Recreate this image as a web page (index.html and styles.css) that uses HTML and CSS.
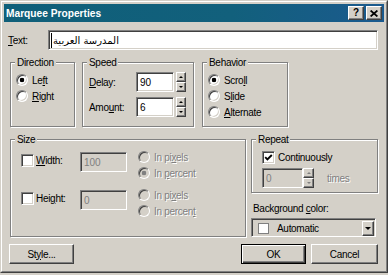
FILE: index.html
```html
<!DOCTYPE html>
<html>
<head>
<meta charset="utf-8">
<link rel="stylesheet" href="styles.css">
</head>
<body>
<div class="window">
 <div class="frame">
  <div class="titlebar">
   <span class="title">Marquee Properties</span>
   <span class="tb-btn help">?</span>
   <span class="tb-btn close"><svg width="8" height="7" viewBox="0 0 8 7"><path d="M0.6 0.5L7.4 6.5M7.4 0.5L0.6 6.5" stroke="#000" stroke-width="1.7" fill="none"/></svg></span>
  </div>
  <div class="client">
   <div class="text-row">
    <span class="text-lbl"><u>T</u>ext:</span>
    <div class="field text-field"><span class="caret"></span><span class="arabic">المدرسة العربية</span></div>
   </div>

   <div class="groups-row">
    <div class="group g-direction">
     <div class="group-title">Direction</div>
     <div class="group-body opts">
      <div class="opt"><span class="radio on"></span><span>Le<u>f</u>t</span></div>
      <div class="opt"><span class="radio"></span><span><u>R</u>ight</span></div>
     </div>
    </div>
    <div class="group g-speed">
     <div class="group-title">Speed</div>
     <div class="group-body spins">
      <div class="spin-row">
       <span class="spin-lbl"><u>D</u>elay:</span>
       <div class="field num">90</div>
       <div class="spinner"><span class="sbtn"><i class="arr up"></i></span><span class="sbtn"><i class="arr down"></i></span></div>
      </div>
      <div class="spin-row">
       <span class="spin-lbl">Amo<u>u</u>nt:</span>
       <div class="field num">6</div>
       <div class="spinner"><span class="sbtn"><i class="arr up"></i></span><span class="sbtn"><i class="arr down"></i></span></div>
      </div>
     </div>
    </div>
    <div class="group g-behavior">
     <div class="group-title">Behavior</div>
     <div class="group-body opts">
      <div class="opt"><span class="radio on"></span><span>Scro<u>l</u>l</span></div>
      <div class="opt"><span class="radio"></span><span>S<u>l</u>ide</span></div>
      <div class="opt"><span class="radio"></span><span><u>A</u>lternate</span></div>
     </div>
    </div>
   </div>

   <div class="bottom-row">
    <div class="group g-size">
     <div class="group-title">Size</div>
     <div class="group-body size-rows">
      <div class="size-row">
       <span class="check"></span>
       <span class="size-lbl"><u>W</u>idth:</span>
       <div class="field num dis">100</div>
       <div class="size-opts">
        <div class="opt dis-txt"><span class="radio dis"></span><span>In pi<u>x</u>els</span></div>
        <div class="opt dis-txt"><span class="radio dis on"></span><span>In <u>p</u>ercent</span></div>
       </div>
      </div>
      <div class="size-row">
       <span class="check"></span>
       <span class="size-lbl">Hei<u>g</u>ht:</span>
       <div class="field num dis">0</div>
       <div class="size-opts">
        <div class="opt dis-txt"><span class="radio dis"></span><span>In pi<u>x</u>els</span></div>
        <div class="opt dis-txt"><span class="radio dis"></span><span>In percen<u>t</u></span></div>
       </div>
      </div>
     </div>
    </div>

    <div class="right-col">
     <div class="group g-repeat">
      <div class="group-title">Repeat</div>
      <div class="group-body">
       <div class="opt"><span class="check"><svg width="9" height="9" viewBox="0 0 9 9"><path d="M1.2 4.2L3.4 6.4L7.8 2" stroke="#000" stroke-width="1.9" fill="none"/></svg></span><span class="cont-lbl">Continuously</span></div>
       <div class="repeat-spin">
        <div class="field num dis rep">0</div>
        <div class="spinner rep-sp"><span class="sbtn"><i class="arr up dis-arr"></i></span><span class="sbtn"><i class="arr down dis-arr"></i></span></div>
        <span class="times dis-txt">times</span>
       </div>
      </div>
     </div>
     <div class="bg-lbl">Background <u>c</u>olor:</div>
     <div class="dropdown">
      <span class="swatch"></span>
      <span class="dd-text">Automatic</span>
      <span class="dd-btn"><i class="arr down"></i></span>
     </div>
    </div>
   </div>

   <div class="buttons-row">
    <span class="btn style-btn">St<u>y</u>le...</span>
    <span class="btn default ok-btn">OK</span>
    <span class="btn cancel-btn">Cancel</span>
   </div>
  </div>
 </div>
</div>
</body>
</html>
```
FILE: styles.css
```css
* { box-sizing: border-box; }
html, body { margin: 0; padding: 0; }
body {
  width: 388px;
  height: 275px;
  overflow: hidden;
  background: #d4d0c8;
  font-family: "Liberation Sans", Arial, sans-serif;
  font-size: 10px;
  letter-spacing: -0.3px;
  color: #000;
}
u { text-decoration: underline; text-underline-offset: 1px; }

.window {
  width: 388px;
  height: 273px;
  border: 1px solid;
  border-color: #d4d0c8 #404040 #404040 #d4d0c8;
}
.frame {
  height: 100%;
  border: 1px solid;
  border-color: #fff #808080 #808080 #fff;
  padding: 2px;
  display: flex;
  flex-direction: column;
}

/* title bar */
.titlebar {
  height: 18px;
  flex: none;
  display: flex;
  align-items: center;
  padding: 0 2px 0 2px;
  background: linear-gradient(to right, #0f5f79 0%, #12607c 60%, #1b5a8e 100%);
}
.title {
  flex: 1;
  color: #fff;
  font-weight: bold;
  font-size: 10.2px;
  letter-spacing: 0;
}
.tb-btn {
  width: 16px;
  height: 14px;
  display: flex;
  align-items: center;
  justify-content: center;
  background: #d4d0c8;
  border: 1px solid;
  border-color: #fff #404040 #404040 #fff;
  box-shadow: inset -1px -1px 0 #808080;
  font-weight: bold;
  font-size: 10px;
  letter-spacing: 0;
  line-height: 1;
}
.tb-btn.close { margin-left: 2px; }

/* client */
.client {
  flex: 1;
  display: flex;
  flex-direction: column;
  padding: 8px 6px 0 6px;
}

/* sunken field */
.field {
  border: 1px solid;
  border-color: #808080 #fff #fff #808080;
  box-shadow: inset 1px 1px 0 #404040, inset -1px -1px 0 #d4d0c8;
  background: #fff;
}

.text-row {
  display: flex;
  align-items: center;
  height: 20px;
}
.text-lbl {
  width: 40px;
  margin-left: -2px;
}
.text-field {
  flex: 1;
  height: 20px;
  display: flex;
  align-items: center;
  padding-left: 2px;
}
.caret {
  width: 1px;
  height: 15px;
  background: #000;
  margin-right: 1px;
}
.arabic {
  font-family: "DejaVu Sans", sans-serif;
  font-size: 10px;
  letter-spacing: 0;
}

/* group boxes */
.group {
  display: flex;
  flex-direction: column;
  border: 1px solid #808080;
  box-shadow: inset 1px 1px 0 #fff, 1px 1px 0 #fff;
}
.group-title {
  align-self: flex-start;
  height: 13px;
  line-height: 13px;
  margin: -7px 0 0 4px;
  padding: 0 2px;
  background: #d4d0c8;
}
.group-body {
  padding-top: 3px;
}

.groups-row {
  display: flex;
  margin-top: 12px;
  height: 65px;
}
.g-direction { width: 65px; }
.g-speed { width: 112px; margin-left: 7px; }
.g-behavior { width: 86px; margin-left: 8px; }

.opts { padding-left: 5px; }
.opt {
  display: flex;
  align-items: center;
  height: 16px;
}

/* radio */
.radio {
  flex: none;
  width: 12px;
  height: 12px;
  margin-right: 4px;
  border-radius: 50%;
  border: 1px solid;
  border-color: #808080 #fff #fff #808080;
  box-shadow: inset 1px 1px 0 #404040, inset -1px -1px 0 #d4d0c8;
  background: #fff;
}
.radio.on {
  background: radial-gradient(circle at 50% 50%, #000 0, #000 2px, #fff 2.6px);
}
.radio.dis { background: #d4d0c8; }
.radio.dis.on {
  background: radial-gradient(circle at 50% 50%, #808080 0, #808080 2px, #d4d0c8 2.6px);
}

/* checkbox */
.check {
  flex: none;
  width: 13px;
  height: 13px;
  display: flex;
  align-items: center;
  justify-content: center;
  border: 1px solid;
  border-color: #808080 #fff #fff #808080;
  box-shadow: inset 1px 1px 0 #404040, inset -1px -1px 0 #d4d0c8;
  background: #fff;
}

.dis-txt { color: #808080; text-shadow: 1px 1px 0 #fff; }

/* speed */
.spins {
  padding-left: 6px;
  display: flex;
  flex-direction: column;
  gap: 5px;
}
.spin-row {
  display: flex;
  align-items: center;
  height: 20px;
}
.spin-lbl { width: 47px; }
.num {
  height: 20px;
  display: flex;
  align-items: center;
  padding-left: 3px;
  letter-spacing: 0;
}
.spin-row .num { width: 38px; }
.spinner {
  width: 10px;
  height: 20px;
  margin-left: 2px;
  display: flex;
  flex-direction: column;
}
.sbtn {
  flex: 1;
  display: flex;
  align-items: center;
  justify-content: center;
  background: #d4d0c8;
  border: 1px solid;
  border-color: #fff #404040 #404040 #fff;
  box-shadow: inset -1px -1px 0 #808080;
}
.arr {
  width: 0;
  height: 0;
  border-left: 2px solid transparent;
  border-right: 2px solid transparent;
}
.arr.up { border-bottom: 2px solid #000; }
.arr.down { border-top: 2px solid #000; }
.arr.up.dis-arr { border-bottom-color: #808080; }
.arr.down.dis-arr { border-top-color: #808080; }

/* bottom row */
.bottom-row {
  display: flex;
  margin-top: 12px;
}
.g-size {
  width: 236px;
  height: 98px;
}
.size-rows {
  padding-left: 10px;
  display: flex;
  flex-direction: column;
  gap: 6px;
}
.size-row {
  display: flex;
  align-items: flex-start;
  height: 32px;
}
.size-row .check { margin-top: 5px; }
.size-lbl {
  width: 46px;
  padding-left: 2px;
  margin-top: 5px;
  line-height: 13px;
}
.num.dis {
  background: #d4d0c8;
  color: #808080;
}
.size-row .num {
  width: 47px;
  margin-top: 3px;
}
.size-opts {
  margin-left: 11px;
  display: flex;
  flex-direction: column;
}

.right-col {
  width: 127px;
  margin-left: 5px;
  display: flex;
  flex-direction: column;
}
.g-repeat {
  height: 54px;
}
.g-repeat .group-body { padding-left: 10px; }
.cont-lbl { margin-left: 3px; }
.repeat-spin {
  display: flex;
  align-items: center;
  margin-top: 3px;
  height: 20px;
}
.num.rep { width: 41px; }
.spinner.rep-sp { width: 11px; margin-left: 0; }
.times { margin-left: 13px; }

.bg-lbl {
  margin-top: 9px;
  padding-left: 2px;
  line-height: 13px;
}
.dropdown {
  margin-top: 3px;
  width: 125px;
  height: 19px;
  display: flex;
  align-items: center;
  border: 1px solid;
  border-color: #808080 #fff #fff #808080;
  box-shadow: inset 1px 1px 0 #404040, inset -1px -1px 0 #d4d0c8;
  background: #d4d0c8;
  padding: 2px 1px 1px 6px;
}
.swatch {
  width: 11px;
  height: 11px;
  background: #fff;
  border: 1px solid #808080;
}
.dd-text {
  flex: 1;
  margin-left: 8px;
}
.dd-btn {
  width: 12px;
  height: 15px;
  display: flex;
  align-items: center;
  justify-content: center;
  background: #d4d0c8;
  border: 1px solid;
  border-color: #fff #404040 #404040 #fff;
  box-shadow: inset -1px -1px 0 #808080;
}
.dd-btn .arr {
  border-left-width: 3px;
  border-right-width: 3px;
  border-top-width: 3px;
}

/* buttons */
.buttons-row {
  display: flex;
  margin-top: 7px;
  height: 20px;
}
.btn {
  display: flex;
  align-items: center;
  justify-content: center;
  height: 20px;
  background: #d4d0c8;
  border: 1px solid;
  border-color: #fff #404040 #404040 #fff;
  box-shadow: inset -1px -1px 0 #808080, inset 1px 1px 0 #d4d0c8;
}
.btn.default {
  border: 1px solid #000;
  box-shadow: inset 1px 1px 0 #fff, inset -1px -1px 0 #404040, inset -2px -2px 0 #808080;
}
.style-btn { width: 65px; margin-left: -1px; }
.ok-btn { width: 65px; margin-left: auto; }
.cancel-btn { width: 67px; margin-left: 5px; }
```
